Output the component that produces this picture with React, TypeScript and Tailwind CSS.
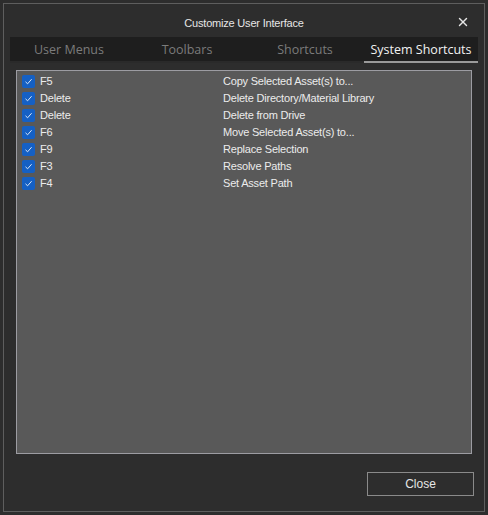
import { X } from 'lucide-react'

const shortcuts = [
  { key: 'F5', action: 'Copy Selected Asset(s) to...' },
  { key: 'Delete', action: 'Delete Directory/Material Library' },
  { key: 'Delete', action: 'Delete from Drive' },
  { key: 'F6', action: 'Move Selected Asset(s) to...' },
  { key: 'F9', action: 'Replace Selection' },
  { key: 'F3', action: 'Resolve Paths' },
  { key: 'F4', action: 'Set Asset Path' },
]

const tabs = ['User Menus', 'Toolbars', 'Shortcuts', 'System Shortcuts']

const Check = () => (
  <span className="flex h-[13px] w-[13px] items-center justify-center rounded-[2px] bg-[#1560c4]">
    <svg width="9" height="9" viewBox="0 0 9 9" fill="none">
      <path d="M1.5 4.8 L3.6 6.8 L7.6 2.2" stroke="#d8e6f8" strokeWidth="1" />
    </svg>
  </span>
)

export default function App() {
  return (
    <div className="h-[515px] w-[488px] bg-[#2d2d2d] p-[3px] font-['Liberation_Sans',Arial,sans-serif]">
      <div className="flex h-[509px] w-[482px] flex-col border border-[#5e5e5e]">
        {/* title bar */}
        <div className="relative flex h-[33px] items-center justify-center pt-[5px] text-[11px] tracking-[-0.2px] text-[#e6e6e6]">
          Customize User Interface
          <X className="absolute right-[14px] top-[11px] h-[14px] w-[14px] text-[#e6e6e6]" strokeWidth={2.4} />
        </div>

        {/* tab strip */}
        <div className="mx-[6px] flex h-[26px] bg-[#1e1e1e] font-['Open_Sans',sans-serif] text-[12.5px]">
          {tabs.map((t, i) => {
            const active = i === tabs.length - 1
            return (
              <div
                key={t}
                className={
                  active
                    ? 'flex w-[114px] items-center justify-center border-b-2 border-[#9a9a9a] pt-[2px] text-[#f2f2f2]'
                    : 'flex w-[118px] items-center justify-center border-b-2 border-[#2a2a2a] pt-[2px] text-[#7b7b7b]'
                }
              >
                {t}
              </div>
            )
          })}
        </div>

        {/* shortcut list */}
        <div className="mx-[12px] mt-[7px] h-[384px] border border-[#9c9ca2] bg-[#595959] pt-[2px]">
          {shortcuts.map((s, i) => (
            <div key={i} className="flex h-[17px] items-center text-[11px] tracking-[-0.2px] text-[#ececec]">
              <div className="flex w-[206px] items-center gap-[5px] pl-[5px]">
                <Check />
                <span>{s.key}</span>
              </div>
              <span>{s.action}</span>
            </div>
          ))}
        </div>

        <div className="mt-[18px] flex justify-end pr-[10px]">
          <button className="h-[24px] w-[107px] border border-[#8a8a8a] text-[12px] text-[#e6e6e6]">
            Close
          </button>
        </div>
      </div>
    </div>
  )
}
